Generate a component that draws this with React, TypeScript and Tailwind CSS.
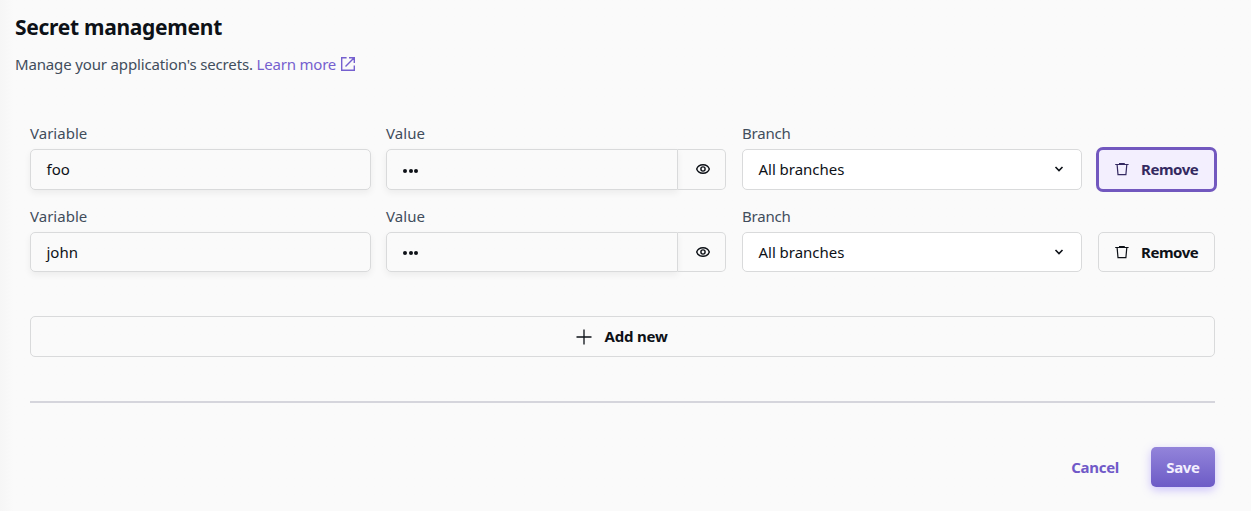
import React from "react";

const EyeIcon = () => (
  <svg width="16" height="16" viewBox="0 0 16 16" fill="none" stroke="#0d1117" strokeWidth="1.4">
    <path d="M1.7 8C2.6 5.4 5 3.8 8 3.8S13.4 5.4 14.3 8C13.4 10.6 11 12.2 8 12.2S2.6 10.6 1.7 8Z" />
    <circle cx="8" cy="8" r="2.1" />
  </svg>
);

const TrashIcon = ({ color }: { color: string }) => (
  <svg width="16" height="16" viewBox="0 0 16 16" fill="none" stroke={color} strokeWidth="1.2">
    <path d="M1.2 3.5H14.6M5.6 3.2V2.5H10.2V3.2M3.1 3.6L4 13.6H11.9L12.8 3.6" />
  </svg>
);

const ExternalIcon = () => (
  <svg width="16" height="16" viewBox="0 0 16 16" fill="none" stroke="#7560cf" strokeWidth="1.4">
    <path d="M6.6 1.7H1.7V14.3H14.3V9.4M9 1.7H14.3V7M14.2 1.8L5.5 10.5" />
  </svg>
);

const ChevronIcon = () => (
  <svg width="10" height="8" viewBox="0 0 10 8" fill="none" stroke="#0d1117" strokeWidth="1.6">
    <path d="M1.5 2L5 5.5L8.5 2" />
  </svg>
);

const Label = ({ children, className }: { children: string; className: string }) => (
  <span className={`block h-[27px] whitespace-nowrap text-[15px] leading-[22px] text-[#414d5c] ${className}`}>
    {children}
  </span>
);

function SecretRow({ name, focused = false }: { name: string; focused?: boolean }) {
  const height = focused ? "h-[41px] pb-px" : "h-10";
  const groupHeight = focused ? "h-[41px]" : "h-10";
  return (
    <div className="flex items-end">
      <div className="mr-[15px] w-[341px]">
        <Label className="tracking-[0.02px]">Variable</Label>
        <div className={`${height} flex items-center rounded-[5px] border border-[#d9dadb] px-[15.5px] shadow-[0_3px_7px_rgba(0,0,0,0.06)]`}>
          <span className="text-[15px] leading-6 text-[#0d1117]">{name}</span>
        </div>
      </div>
      <div className="mr-4 w-[340px]">
        <Label className="tracking-[0.08px]">Value</Label>
        <div className={`${groupHeight} flex`}>
          <div className="flex w-[292px] items-center gap-[1.6px] rounded-l-[5px] border border-[#d9dadb] pl-4 pt-[2px] shadow-[0_3px_7px_rgba(0,0,0,0.06)]">
            <i className="size-[4px] rounded-full bg-[#0d1117]" />
            <i className="size-[4px] rounded-full bg-[#0d1117]" />
            <i className="size-[4px] rounded-full bg-[#0d1117]" />
          </div>
          <div className={`flex flex-1 items-center justify-center rounded-r-[5px] border border-l-0 border-[#d9dadb] pl-[2px] ${focused ? "pb-px" : ""}`}>
            <EyeIcon />
          </div>
        </div>
      </div>
      <div className="mr-4 w-[340px]">
        <Label className="tracking-[-0.2px]">Branch</Label>
        <div className={`${height} flex items-center justify-between rounded-[5px] border border-[#d9dadb] bg-white pl-[15.5px] pr-[17px]`}>
          <span className="text-[15px] leading-6 tracking-[-0.03px] text-[#0d1117]">All branches</span>
          <ChevronIcon />
        </div>
      </div>
      {focused ? (
        <button className="-mx-0.5 -mb-0.5 flex h-[45px] w-[121px] items-center rounded-[7px] border-[3px] border-[#7258bf] bg-[#f3effe] pb-px pl-[15px] text-[15px] font-bold text-[#342a61]">
          <TrashIcon color="#342a61" />
          <span className="ml-[11px] tracking-[-0.45px]">Remove</span>
        </button>
      ) : (
        <button className="flex h-10 w-[117px] items-center rounded-[5px] border border-[#d9dadb] pl-[15px] text-[15px] font-bold text-[#0d1117]">
          <TrashIcon color="#0d1117" />
          <span className="ml-[11px] tracking-[-0.45px]">Remove</span>
        </button>
      )}
    </div>
  );
}

export default function App() {
  return (
    <main className="h-[511px] w-[1251px] overflow-hidden bg-[#fafafa] bg-linear-to-r from-[#f6f6f6] to-[#fafafa] to-[14px] pl-[15px] pr-9 pt-3 font-['Noto_Sans',sans-serif]">
      <h1 className="h-[30px] text-[21px] font-bold leading-[30px] tracking-[-0.29px] text-[#0d1117]">
        <span>Secret management</span>
      </h1>
      <p className="mt-[10px] flex h-6 items-center text-[15px] leading-6 text-[#414d5c]">
        <span className="whitespace-pre tracking-[-0.15px]">Manage your application's secrets. </span>
        <a className="flex items-center gap-1 text-[#7560cf]">
          <span className="tracking-[-0.2px]">Learn more</span>
          <ExternalIcon />
        </a>
      </p>
      <section className="ml-[15px] mt-[46px] w-[1185px]">
        <SecretRow name="foo" focused />
        <div className="h-[15px]" />
        <SecretRow name="john" />
        <button className="mt-11 flex h-[41px] w-full items-center justify-center rounded-[5px] border border-[#d9dadb] pr-px text-[15px] font-bold text-[#0d1117]">
          <svg width="16" height="16" viewBox="0 0 16 16" fill="none" stroke="#0d1117" strokeWidth="1.3">
            <path d="M8 .5V15.5M.5 8H15.5" />
          </svg>
          <span className="ml-3 tracking-[-0.2px]">Add new</span>
        </button>
        <hr className="mt-11 border-t-2 border-[#d5d5dc]" />
        <div className="mt-11 flex h-10 items-center justify-end text-[15px] font-bold">
          <button className="mr-8 tracking-[-0.3px] text-[#7059c8]">Cancel</button>
          <button className="h-10 w-16 rounded-[5px] bg-linear-to-b from-[#9384da] to-[#6d5bc6] tracking-[-0.3px] text-[#f3effe] shadow-[0_3px_10px_rgba(117,90,255,0.35)]">
            Save
          </button>
        </div>
      </section>
    </main>
  );
}
